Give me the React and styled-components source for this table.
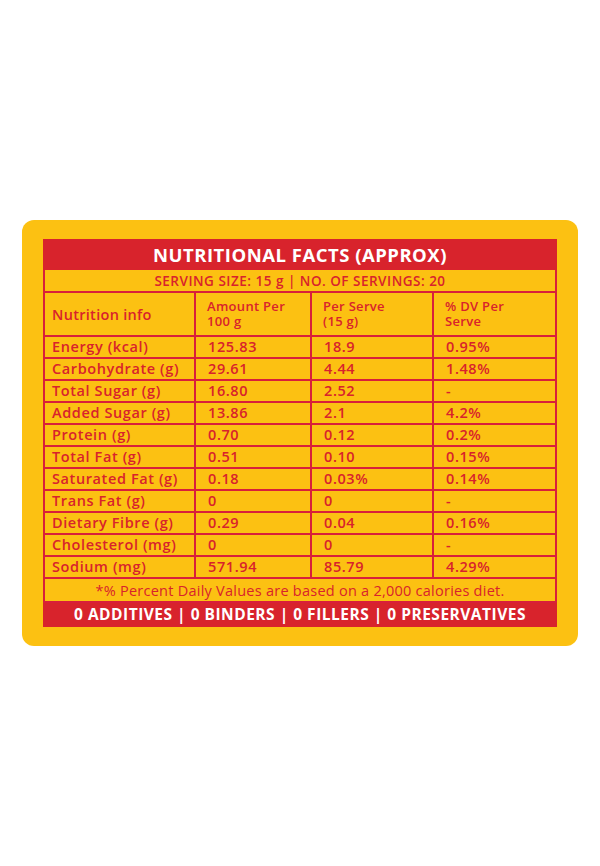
import React from "react";
import styled, { createGlobalStyle } from "styled-components";

const rows = [
    ["Energy (kcal)", "125.83", "18.9", "0.95%"],
    ["Carbohydrate (g)", "29.61", "4.44", "1.48%"],
    ["Total Sugar (g)", "16.80", "2.52", "-"],
    ["Added Sugar (g)", "13.86", "2.1", "4.2%"],
    ["Protein (g)", "0.70", "0.12", "0.2%"],
    ["Total Fat (g)", "0.51", "0.10", "0.15%"],
    ["Saturated Fat (g)", "0.18", "0.03%", "0.14%"],
    ["Trans Fat (g)", "0", "0", "-"],
    ["Dietary Fibre (g)", "0.29", "0.04", "0.16%"],
    ["Cholesterol (mg)", "0", "0", "-"],
    ["Sodium (mg)", "571.94", "85.79", "4.29%"],
];

export default function App() {
    return (
        <Page>
            <GlobalStyle />
            <Card>
                <Facts>
                    <colgroup>
                        <col style={{ width: 151 }} />
                        <col style={{ width: 116 }} />
                        <col style={{ width: 122 }} />
                        <col style={{ width: 123 }} />
                    </colgroup>
                    <thead>
                        <tr>
                            <Banner colSpan={4}>NUTRITIONAL FACTS (APPROX)</Banner>
                        </tr>
                        <tr>
                            <Serving colSpan={4}>
                                SERVING SIZE: 15 g | NO. OF SERVINGS: 20
                            </Serving>
                        </tr>
                        <tr>
                            <HeadCell $first>Nutrition info</HeadCell>
                            <HeadCell>
                                <HeadLine>Amount Per</HeadLine>
                                <HeadLine>100 g</HeadLine>
                            </HeadCell>
                            <HeadCell>
                                <HeadLine>Per Serve</HeadLine>
                                <HeadLine>(15 g)</HeadLine>
                            </HeadCell>
                            <HeadCell>
                                <HeadLine>% DV Per</HeadLine>
                                <HeadLine>Serve</HeadLine>
                            </HeadCell>
                        </tr>
                    </thead>
                    <tbody>
                        {rows.map((row) => (
                            <tr key={row[0]}>
                                {row.map((value, i) => (
                                    <Cell key={i} $first={i === 0}>{value}</Cell>
                                ))}
                            </tr>
                        ))}
                    </tbody>
                    <tfoot>
                        <tr>
                            <Note colSpan={4}>
                                *% Percent Daily Values are based on a 2,000 calories diet.
                            </Note>
                        </tr>
                        <tr>
                            <Claims colSpan={4}>
                                0 ADDITIVES | 0 BINDERS | 0 FILLERS | 0 PRESERVATIVES
                            </Claims>
                        </tr>
                    </tfoot>
                </Facts>
            </Card>
        </Page>
    );
}

const RED = "#d8232c";
const LINE = "#d81f3b";
const YELLOW = "#fcc112";

const GlobalStyle = createGlobalStyle`
    * { box-sizing: border-box; }
    body {
        margin: 0;
        background: #fff;
        font-family: "Open Sans", "Liberation Sans", sans-serif;
    }
`;

const Page = styled.div`
    height: 866px;
    display: flex;
    align-items: center;
    justify-content: center;
`;

const Card = styled.div`
    width: 556px;
    background: ${YELLOW};
    border-radius: 12px;
    padding: 19px 21px 19px 21px;
`;

const Facts = styled.table`
    width: 514px;
    border-collapse: collapse;
    table-layout: fixed;
    color: ${RED};
`;

const Banner = styled.th`
    background: ${RED};
    color: #fff;
    height: 29px;
    padding: 0;
    font-size: 18.5px;
    font-weight: 700;
    letter-spacing: 0.5px;
    text-align: center;
    border: 2px solid ${RED};
`;

const Serving = styled.td`
    height: 23px;
    padding: 0;
    font-size: 13.5px;
    font-weight: 600;
    letter-spacing: 0.5px;
    text-align: center;
    border: 2px solid ${LINE};
`;

const HeadCell = styled.th`
    height: 44px;
    padding: 0 0 0 ${(p) => (p.$first ? "7px" : "11px")};
    font-size: ${(p) => (p.$first ? "14.5px" : "13px")};
    font-weight: 600;
    letter-spacing: 0.3px;
    text-align: left;
    border: 2px solid ${LINE};
`;

const HeadLine = styled.div`
    height: 15px;
    line-height: 15px;
    white-space: nowrap;
`;

const Cell = styled.td`
    height: 22px;
    padding: 0 0 0 ${(p) => (p.$first ? "7px" : "12px")};
    font-size: 14.5px;
    line-height: 18px;
    font-weight: 600;
    letter-spacing: 0.6px;
    white-space: nowrap;
    border: 2px solid ${LINE};
`;

const Note = styled.td`
    height: 24px;
    padding: 0;
    font-size: 14.5px;
    font-weight: 400;
    letter-spacing: 0.25px;
    text-align: center;
    border: 2px solid ${LINE};
`;

const Claims = styled.td`
    background: ${RED};
    color: #fff;
    height: 24px;
    padding: 0;
    font-size: 15.5px;
    font-weight: 700;
    letter-spacing: 0.5px;
    text-align: center;
    border: 2px solid ${RED};
`;
